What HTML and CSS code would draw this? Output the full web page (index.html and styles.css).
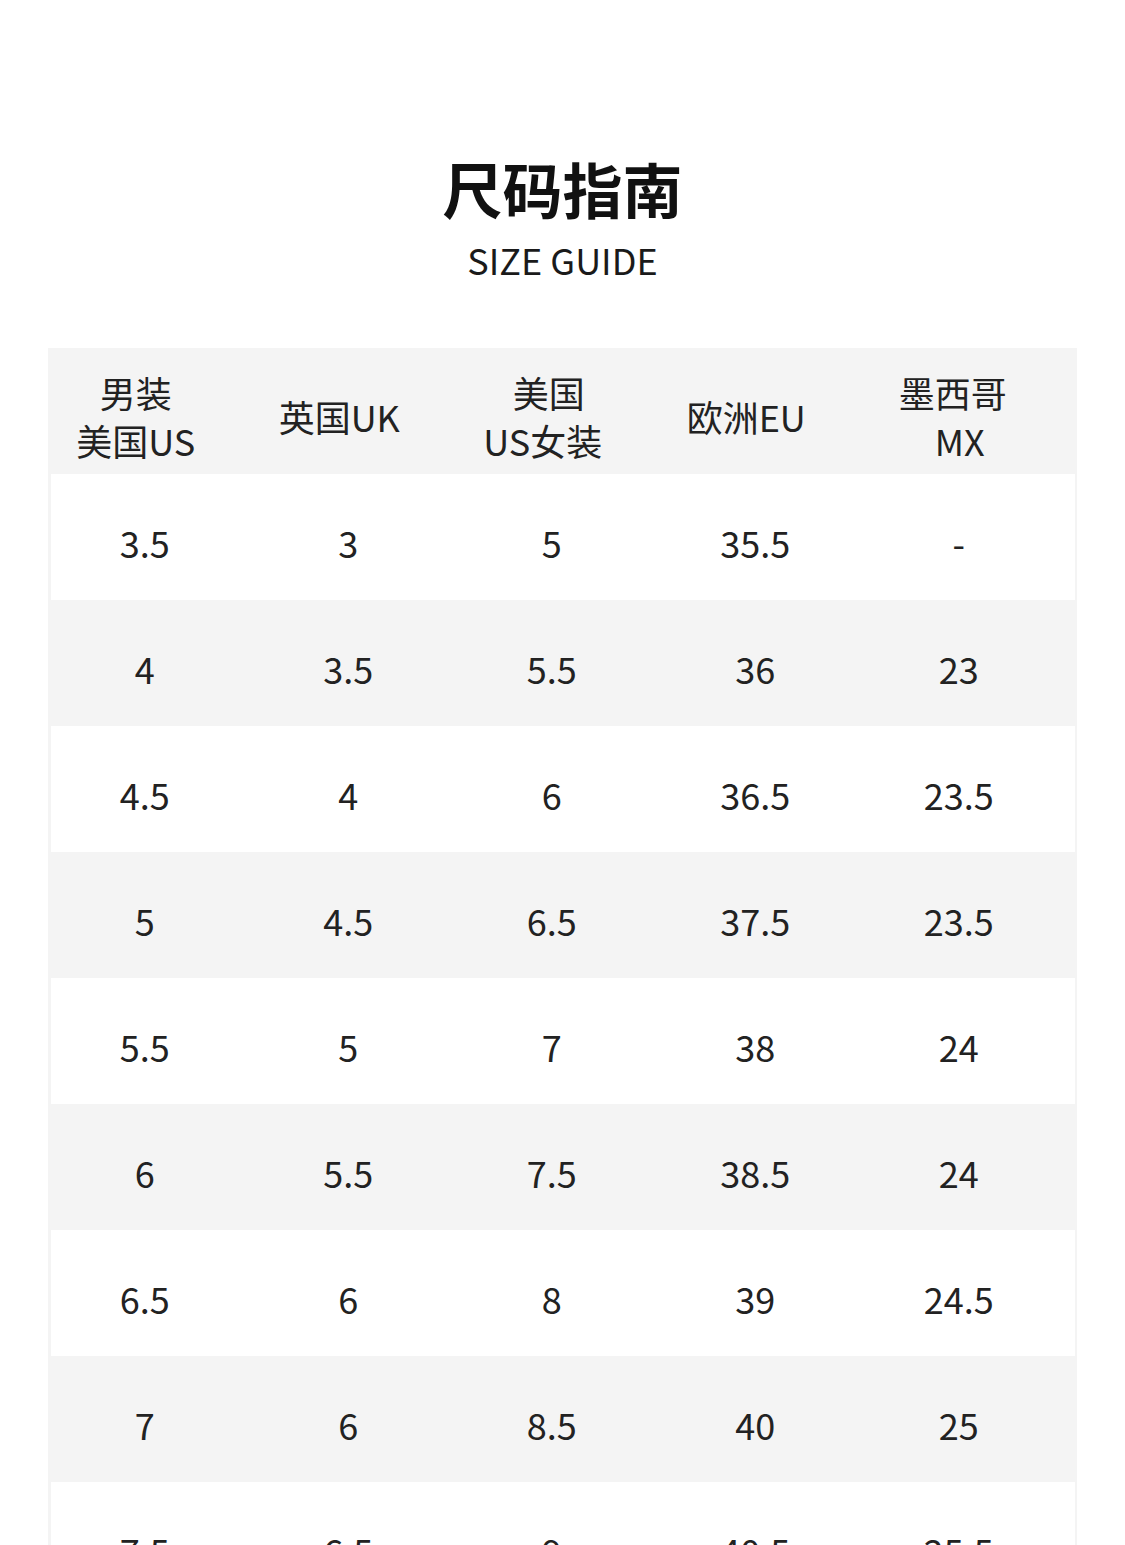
FILE: index.html
```html
<!DOCTYPE html>
<html lang="zh-CN">
<head>
<meta charset="utf-8">
<title>尺码指南</title>
<link rel="stylesheet" href="styles.css">
</head>
<body>
<div class="page">
  <header class="heading">
    <h1 class="title">尺码指南</h1>
    <p class="subtitle">SIZE GUIDE</p>
  </header>
  <div class="table">
    <div class="row head">
      <div class="cells">
        <div class="cell"><span class="ln">男装</span><span class="ln">美国US</span></div>
        <div class="cell"><span class="ln">英国UK</span></div>
        <div class="cell"><span class="ln sh6">美国</span><span class="ln">US女装</span></div>
        <div class="cell"><span class="ln">欧洲EU</span></div>
        <div class="cell"><span class="ln sh3">墨西哥</span><span class="ln sh10">MX</span></div>
      </div>
    </div>
    <div class="row light"><div class="cells"><div class="cell">3.5</div><div class="cell">3</div><div class="cell">5</div><div class="cell">35.5</div><div class="cell">-</div></div></div>
    <div class="row"><div class="cells"><div class="cell">4</div><div class="cell">3.5</div><div class="cell">5.5</div><div class="cell">36</div><div class="cell">23</div></div></div>
    <div class="row light"><div class="cells"><div class="cell">4.5</div><div class="cell">4</div><div class="cell">6</div><div class="cell">36.5</div><div class="cell">23.5</div></div></div>
    <div class="row"><div class="cells"><div class="cell">5</div><div class="cell">4.5</div><div class="cell">6.5</div><div class="cell">37.5</div><div class="cell">23.5</div></div></div>
    <div class="row light"><div class="cells"><div class="cell">5.5</div><div class="cell">5</div><div class="cell">7</div><div class="cell">38</div><div class="cell">24</div></div></div>
    <div class="row"><div class="cells"><div class="cell">6</div><div class="cell">5.5</div><div class="cell">7.5</div><div class="cell">38.5</div><div class="cell">24</div></div></div>
    <div class="row light"><div class="cells"><div class="cell">6.5</div><div class="cell">6</div><div class="cell">8</div><div class="cell">39</div><div class="cell">24.5</div></div></div>
    <div class="row"><div class="cells"><div class="cell">7</div><div class="cell">6</div><div class="cell">8.5</div><div class="cell">40</div><div class="cell">25</div></div></div>
    <div class="row light"><div class="cells"><div class="cell">7.5</div><div class="cell">6.5</div><div class="cell">9</div><div class="cell">40.5</div><div class="cell">25.5</div></div></div>
    <div class="row"><div class="cells"><div class="cell">8</div><div class="cell">7</div><div class="cell">9.5</div><div class="cell">41</div><div class="cell">26</div></div></div>
  </div>
</div>
</body>
</html>
```

FILE: styles.css
```css
html, body {
  margin: 0;
  padding: 0;
  background: #ffffff;
}

body {
  font-family: "Noto Sans CJK SC", "Noto Sans", sans-serif;
  color: #222222;
}

.page {
  padding-top: 152px;
}

.heading {
  text-align: center;
}

.title {
  margin: 0;
  font-size: 60px;
  line-height: 72px;
  font-weight: 700;
  color: #111111;
}

.subtitle {
  margin: 11px 0 0;
  font-size: 36px;
  line-height: 48px;
  font-weight: 400;
  color: #1a1a1a;
}

.table {
  margin: 65px 48px 0;
  background: #f4f4f4;
  padding: 0 2px 0 3px;
}

.row {
  height: 126px;
}

.row.light {
  background: #ffffff;
}

.cells {
  display: grid;
  grid-template-columns: repeat(5, 203.5px);
  margin-left: -8px;
  height: 100%;
  align-items: center;
}

.cell {
  text-align: center;
  font-size: 36px;
  line-height: 36px;
  padding-top: 10px;
}

.head .cell {
  font-size: 36px;
  line-height: 48px;
  padding-right: 18px;
  display: flex;
  flex-direction: column;
  align-items: center;
}

.ln {
  display: block;
  white-space: nowrap;
}

.sh6 { padding-left: 12px; }
.sh3 { padding-left: 6px; }
.sh10 { padding-left: 20px; }
```
